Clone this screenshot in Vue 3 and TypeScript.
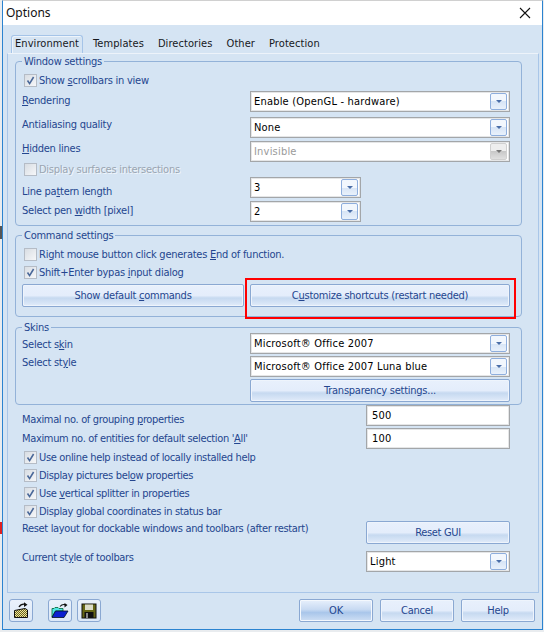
<template>
  <div class="window">
    <div class="titlebar">
      <span class="title">Options</span>
      <svg class="close" width="12" height="12" viewBox="0 0 12 12"><path d="M1 1 L11 11 M11 1 L1 11" stroke="#111" stroke-width="1.1" fill="none" /></svg>
    </div>

    <div class="client">
      <div class="tabs">
        <div class="tab active">Environment</div>
        <div class="tab">Templates</div>
        <div class="tab">Directories</div>
        <div class="tab">Other</div>
        <div class="tab">Protection</div>
      </div>

      <div class="panel">
        <section class="group g-window">
          <span class="legend">Window settings</span>
          <div class="chk-row h17">
            <span class="chk on"><svg width="11" height="11" viewBox="0 0 11 11"><path d="M2.5 5.5 L4.6 8.6 L8.6 2" /></svg></span>
            <span>Show <u>s</u>crollbars in view</span>
          </div>
          <div class="row h26">
            <span class="lbl m3"><u>R</u>endering</span>
            <div class="combo wide"><span>Enable (OpenGL - hardware)</span><i class="drop"></i></div>
          </div>
          <div class="row h24">
            <span class="lbl m1">Antialiasing quality</span>
            <div class="combo wide"><span>None</span><i class="drop"></i></div>
          </div>
          <div class="row h22">
            <span class="lbl m1"><u>H</u>idden lines</span>
            <div class="combo wide off"><span>Invisible</span><i class="drop"></i></div>
          </div>
          <div class="chk-row h14 disabled">
            <span class="chk"></span>
            <span>Display surfaces intersections</span>
          </div>
          <div class="row h24">
            <span class="lbl m8">Line pa<u>t</u>tern length</span>
            <div class="combo short"><span>3</span><i class="drop"></i></div>
          </div>
          <div class="row h21">
            <span class="lbl m3">Select pen <u>w</u>idth [pixel]</span>
            <div class="combo short"><span>2</span><i class="drop"></i></div>
          </div>
        </section>

        <section class="group g-command">
          <span class="legend">Command settings</span>
          <div class="chk-row h18">
            <span class="chk"></span>
            <span>Right mouse button click generates <u>E</u>nd of function.</span>
          </div>
          <div class="chk-row h18">
            <span class="chk on"><svg width="11" height="11" viewBox="0 0 11 11"><path d="M2.5 5.5 L4.6 8.6 L8.6 2" /></svg></span>
            <span>Shift+Enter bypas <u>i</u>nput dialog</span>
          </div>
          <div class="btn-row">
            <button class="btn b-default" type="button">Show default <u>c</u>ommands</button>
            <button class="btn b-custom" type="button">C<u>u</u>stomize shortcuts (restart needed)</button>
          </div>
        </section>

        <section class="group g-skins">
          <span class="legend">Skins</span>
          <div class="row h23">
            <span class="lbl m5">Select s<u>k</u>in</span>
            <div class="combo wide"><span>Microsoft® Office 2007</span><i class="drop"></i></div>
          </div>
          <div class="row h23">
            <span class="lbl">Select st<u>y</u>le</span>
            <div class="combo wide"><span>Microsoft® Office 2007 Luna blue</span><i class="drop"></i></div>
          </div>
          <div class="row">
            <span class="lbl"></span>
            <button class="btn b-wide" type="button">Transparency settings...</button>
          </div>
        </section>

        <div class="rest">
          <div class="row h23">
            <span class="lbl m8">Maximal no. of grouping <u>p</u>roperties</span>
            <div class="field"><span>500</span></div>
          </div>
          <div class="row h23">
            <span class="lbl m4">Maximum no. of entities for default selection '<u>A</u>ll'</span>
            <div class="field"><span>100</span></div>
          </div>
          <div v-for="c in checks" :key="c.pre" class="chk-row check-line">
            <span class="chk on"><svg width="11" height="11" viewBox="0 0 11 11"><path d="M2.5 5.5 L4.6 8.6 L8.6 2" /></svg></span>
            <span>{{ c.pre }}<u>{{ c.key }}</u>{{ c.post }}</span>
          </div>
          <div class="row h30">
            <span class="lbl m1">Reset layout for dockable windows and toolbars (after restart)</span>
            <button class="btn b-reset" type="button">Reset GUI</button>
          </div>
          <div class="row">
            <span class="lbl">Current st<u>y</u>le of toolbars</span>
            <div class="combo narrow"><span>Light</span><i class="drop"></i></div>
          </div>
        </div>
      </div>

      <div class="footer">
        <button class="icon-btn" type="button" aria-label="Send">
          <svg width="16" height="17" viewBox="0 0 16 17">
            <defs><pattern id="chk" width="2" height="2" patternUnits="userSpaceOnUse"><rect width="2" height="2" fill="#efe7a0" /><rect width="1" height="1" fill="#6a6420" /><rect x="1" y="1" width="1" height="1" fill="#6a6420" /></pattern></defs>
            <path d="M1.5 8.5 L12 6.5 L14.5 8 V15.5 H1.5 Z" fill="url(#chk)" stroke="#111" />
            <path d="M6 5 Q8 1.5 12 2.2" fill="none" stroke="#111" stroke-width="1.3" />
            <path d="M11 0.2 L14.5 2.8 L11 5 Z" fill="#111" />
          </svg>
        </button>
        <button class="icon-btn second" type="button" aria-label="Open">
          <svg width="18" height="16" viewBox="0 0 18 16">
            <path d="M1 14 V5.5 H3 L4 4.5 H7 L8 5.5 H12 V8 H4.5 L1 14 Z" fill="#4fe4e4" stroke="#063" stroke-width=".8" />
            <path d="M1 14.5 L4.5 8 H17 L13 14.5 Z" fill="#0a1fd0" stroke="#012" stroke-width=".8" />
            <path d="M9 3.5 Q11 1 14 1.6" fill="none" stroke="#111" stroke-width="1.1" />
            <path d="M13.5 0 L16.5 2 L13.5 4.5 Z" fill="#111" />
          </svg>
        </button>
        <button class="icon-btn" type="button" aria-label="Save">
          <svg width="16" height="16" viewBox="0 0 16 16">
            <rect x="1" y="1" width="14" height="14" fill="#666616" stroke="#111" />
            <rect x="4" y="1.5" width="8" height="5.5" fill="#dcdcc8" />
            <rect x="3.5" y="9" width="9" height="6" fill="#111" />
            <rect x="5" y="10" width="2" height="5" fill="#8a8a8a" />
          </svg>
        </button>
        <div class="spacer"></div>
        <button class="btn dlg primary" type="button">OK</button>
        <button class="btn dlg" type="button">Cancel</button>
        <button class="btn dlg" type="button">Help</button>
      </div>
    </div>
    <div class="highlight"></div>
    <i class="edge-mark dark"></i>
    <i class="edge-mark red"></i>
  </div>
</template>

<script setup lang="ts">
type Check = { pre: string; key: string; post: string };

const checks: Check[] = [
  { pre: 'Use online help instead of locally installed help', key: '', post: '' },
  { pre: 'Display pictures bel', key: 'o', post: 'w properties' },
  { pre: 'Use ', key: 'v', post: 'ertical splitter in properties' },
  { pre: 'Display ', key: 'g', post: 'lobal coordinates in status bar' },
];
</script>

<style>
html, body { margin: 0; background: #e9ecef; }
</style>

<style scoped>
.window {
  position: relative;
  box-sizing: border-box;
  width: 541px;
  height: 630px;
  margin-left: 2px;
  border: 1px solid #2b83d0;
  border-top-color: #d0d0d0;
  display: flex;
  flex-direction: column;
  font-family: "DejaVu Sans", sans-serif;
  font-stretch: condensed;
  font-size: 11px;
  line-height: 14px;
  letter-spacing: -.25px;
  color: #24468f;
}
u { text-underline-offset: 1px; }

.titlebar {
  height: 24px;
  flex: none;
  background: #fff;
  display: flex;
  align-items: center;
  justify-content: space-between;
  padding: 0 11px 0 3px;
}
.title { font-family: "Noto Sans", sans-serif; font-stretch: normal; font-size: 12px; letter-spacing: 0; color: #111; }

.client {
  flex: 1;
  background: #d5e4f3;
  display: flex;
  flex-direction: column;
  padding: 0 3px 0 4px;
}

.tabs {
  display: flex;
  height: 18px;
  margin-top: 10px;
  padding-left: 4px;
  flex: none;
}
.tab {
  padding: 2px 7px 0;
  color: #16181c;
  letter-spacing: .08px;
  white-space: nowrap;
}
.tab.active {
  border: 1px solid #a5c4e8;
  border-bottom: none;
  border-radius: 3px 3px 0 0;
  padding: 1px 3px 0;
  background: #d5e4f3;
  margin-right: 3px;
  box-shadow: inset 1px 1px 0 #edf4fb;
}

.panel {
  flex: none;
  height: 540px;
  box-sizing: border-box;
  border: 1px solid #a9c6e8;
  border-top-color: #edf3fa;
  padding: 7px 16px 0 7px;
  display: flex;
  flex-direction: column;
}

.group {
  position: relative;
  box-sizing: border-box;
  border: 1px solid #93b2d8;
  border-radius: 4px;
  padding: 0 10px 0 6px;
}
.g-window { height: 165px; padding-top: 12px; }
.g-command { height: 82px; margin-top: 9px; padding-top: 12px; }
.g-skins { height: 78px; margin-top: 10px; padding-top: 5px; }

.legend {
  position: absolute;
  top: -7px;
  left: 6px;
  padding: 0 2px;
  background: #d5e4f3;
}

.row { display: flex; align-items: flex-start; }
.h21 { height: 21px; }
.h22 { height: 22px; }
.h23 { height: 23px; }
.h24 { height: 24px; }
.h26 { height: 26px; }
.h30 { height: 30px; }
.h14 { height: 14px; }
.h17 { height: 17px; }
.h18 { height: 18px; }
.check-line { height: 18px; }
.check-line:nth-last-child(3) { height: 16px; }

.lbl { white-space: nowrap; width: 228px; flex: none; }
.rest .lbl { width: 344px; }
.m1 { margin-top: 1px; }
.m3 { margin-top: 3px; }
.m4 { margin-top: 4px; }
.m5 { margin-top: 5px; }
.m8 { margin-top: 8px; }

.chk-row {
  display: flex;
  align-items: flex-start;
  gap: 2px;
  padding-left: 2px;
  white-space: nowrap;
}
.chk {
  box-sizing: border-box;
  width: 13px;
  height: 13px;
  flex: none;
  border: 1px solid #b5bcc6;
  background: linear-gradient(135deg, #d8dde3, #f6f7f9);
  display: flex;
  align-items: center;
  justify-content: center;
}
.chk svg path { fill: none; stroke: #4a6899; stroke-width: 1.6; }
.disabled { color: #9aa5b2; text-shadow: 1px 1px 0 #f0f5fa; }

.combo, .field {
  box-sizing: border-box;
  height: 21px;
  border: 1px solid #a3a6a9;
  box-shadow: inset 0 0 0 1px rgba(168, 171, 174, .3);
  background: #fff;
  color: #000;
  display: flex;
  align-items: center;
  justify-content: space-between;
  padding: 0 2px 0 3px;
  letter-spacing: .2px;
  flex: none;
}
.wide { width: 260px; }
.short { width: 111px; }
.narrow { width: 144px; }
.field { width: 144px; padding-left: 5px; }
.combo.off { color: #9a9a9a; }

.drop {
  box-sizing: border-box;
  width: 17px;
  height: 17px;
  border: 1px solid #8eaedd;
  border-radius: 2px;
  background: linear-gradient(#f2f7fd 50%, #d7e5f6 50%, #e9f1fb);
  display: flex;
  align-items: center;
  justify-content: center;
}
.drop::before {
  content: "";
  border-left: 3px solid transparent;
  border-right: 3px solid transparent;
  border-top: 3px solid #4a6ea8;
}
.off .drop { border-color: #d0d0d0; background: linear-gradient(#eeeeee 50%, #c8c8c8 50%, #e0e0e0); }
.off .drop::before { border-top-color: #777; }

.btn {
  box-sizing: border-box;
  height: 23px;
  padding: 0;
  border: 1px solid #8aa8d2;
  border-radius: 2px;
  background: linear-gradient(#e8f0fc 0, #e4edfb 50%, #c6d9f0 62%, #d6e4f6 85%, #e2ecf9 100%);
  box-shadow: inset 0 0 0 1px #eef4fc;
  color: #24468f;
  font: inherit;
  letter-spacing: inherit;
  flex: none;
  white-space: nowrap;
}
.btn-row { display: flex; gap: 6px; }
.b-default { width: 222px; }
.b-custom { width: 260px; }
.b-wide { width: 260px; }
.b-reset { width: 144px; }

.rest {
  padding: 0 10px 0 7px;
  display: flex;
  flex-direction: column;
  letter-spacing: -.34px;
}

.footer {
  display: flex;
  margin-top: 6px;
  padding-left: 2px;
  align-items: flex-start;
}
.icon-btn {
  box-sizing: border-box;
  width: 24px;
  height: 23px;
  padding: 0;
  margin-right: 5px;
  border: 1px solid #8aa8d2;
  border-radius: 3px;
  background: linear-gradient(#eaf1fb, #dce8f7);
  display: flex;
  align-items: center;
  justify-content: center;
}
.icon-btn.second { margin-left: 10px; }
.spacer { flex: 1; }
.dlg { width: 74px; margin-left: 7px; }
.dlg.primary {
  background: linear-gradient(#e8f0fc 0, #c8daf2 45%, #a9c6ea 60%, #cfdff4 100%);
  box-shadow: inset 0 0 0 1px #f4f8fd;
}
.footer .btn:last-child { margin-right: 4px; }

.highlight {
  position: absolute;
  left: 242px;
  top: 277px;
  width: 271px;
  height: 41px;
  box-sizing: border-box;
  border: 2px solid #f00;
}

.edge-mark { position: absolute; left: -3px; width: 2px; }
.edge-mark.dark { top: 225px; height: 13px; background: #555; }
.edge-mark.red { top: 521px; height: 12px; background: #e02020; }
</style>
